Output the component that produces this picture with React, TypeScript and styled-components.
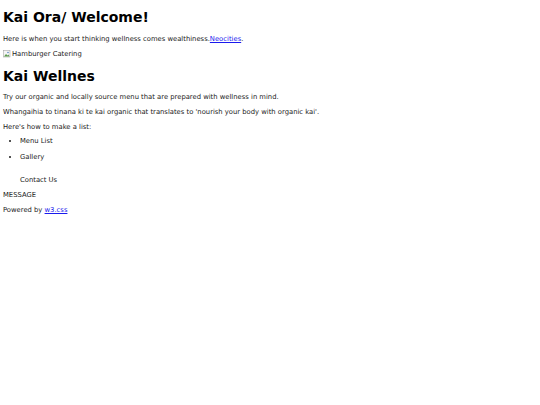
import React from "react";
import styled, { createGlobalStyle } from "styled-components";

const GlobalStyle = createGlobalStyle`
  html, body {
    margin: 0;
    padding: 0;
    background: #ffffff;
  }
  body {
    font-family: "DejaVu Sans", Verdana, sans-serif;
    font-size: 6.8px;
    color: #1a1a1a;
  }
`;

const Page = styled.div`
  padding: 0 3px;
`;

const Title = styled.h1`
  font-size: 14px;
  font-weight: bold;
  color: #000000;
  margin: 9px 0 10px;
`;

const SubTitle = styled.h2`
  font-size: 14px;
  font-weight: bold;
  color: #000000;
  margin: 10px 0 9px;
`;

const Para = styled.p`
  margin: 7px 0;
  line-height: 1.2;
`;

const Link = styled.a`
  color: #1a1aee;
  text-decoration: underline;
`;

const BrokenImage = styled.div`
  display: flex;
  align-items: center;
  gap: 1px;
  height: 8px;
  margin: 7px 0;
`;

const List = styled.ul`
  margin: -2px 0 7px;
  padding-left: 17px;
  list-style: disc;
`;

const Item = styled.li<{ $plain?: boolean }>`
  margin: ${(props) => (props.$plain ? "15px 0 0" : "0 0 8px")};
  list-style: ${(props) => (props.$plain ? "none" : "disc")};
  line-height: 1.2;
`;

function BrokenIcon() {
  return (
    <svg width="8" height="8" viewBox="0 0 16 16">
      <rect x="1" y="1" width="13" height="13" fill="#f4f4f4" stroke="#9a9a9a" />
      <path d="M2 13 L6 8 L9 11 L11 9 L13 13 Z" fill="#5a9a4a" />
      <circle cx="10" cy="5" r="1.5" fill="#4a7ac0" />
    </svg>
  );
}

export default function App() {
  return (
    <>
      <GlobalStyle />
      <Page>
        <Title>Kai Ora/ Welcome!</Title>
        <Para>
          Here is when you start thinking wellness comes wealthiness.
          <Link href="#">Neocities</Link>.
        </Para>
        <BrokenImage>
          <BrokenIcon />
          Hamburger Catering
        </BrokenImage>
        <SubTitle>Kai Wellnes</SubTitle>
        <Para>
          Try our organic and locally source menu that are prepared with
          wellness in mind.
        </Para>
        <Para>
          Whangaihia to tinana ki te kai organic that translates to 'nourish
          your body with organic kai'.
        </Para>
        <Para>Here's how to make a list:</Para>
        <List>
          <Item>Menu List</Item>
          <Item>Gallery</Item>
          <Item $plain>Contact Us</Item>
        </List>
        <Para>MESSAGE</Para>
        <Para>
          Powered by <Link href="#">w3.css</Link>
        </Para>
      </Page>
    </>
  );
}
